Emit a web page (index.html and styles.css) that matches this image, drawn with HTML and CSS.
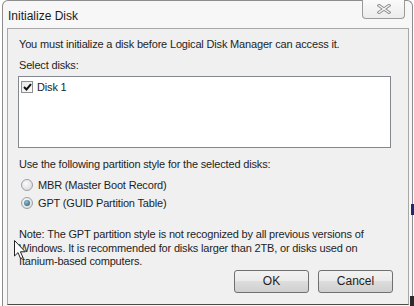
FILE: index.html
```html
<!DOCTYPE html>
<html lang="en">

<head>
    <meta charset="UTF-8">
    <meta name="viewport" content="width=device-width, initial-scale=1.0">
    <title>Initialize Disk</title>
    <link rel="stylesheet" href="styles.css">
</head>

<body>
    <div class="window">
        <div class="titlebar">
            <span class="title">Initialize Disk</span>
            <button class="close-button" aria-label="Close">
                <svg width="14" height="10" viewBox="0 0 14 10">
                    <path d="M2 1.5 L12 8.5 M12 1.5 L2 8.5" stroke="#8a8a8a" stroke-width="3.2" stroke-linecap="square" fill="none" />
                    <path d="M2 1.5 L12 8.5 M12 1.5 L2 8.5" stroke="#f4f4f4" stroke-width="1.3" stroke-linecap="square" fill="none" />
                </svg>
            </button>
        </div>
        <div class="panel">
            <p class="intro">You must initialize a disk before Logical Disk Manager can access it.</p>
            <p class="label">Select disks:</p>
            <div class="disk-list">
                <label class="disk-item">
                    <span class="checkbox">
                        <svg width="9" height="8" viewBox="0 0 9 8">
                            <path d="M1 4 L3.5 6.5 L8 1.2" stroke="#111" stroke-width="2" fill="none" />
                        </svg>
                    </span>
                    Disk 1
                </label>
            </div>
            <p class="label style-label">Use the following partition style for the selected disks:</p>
            <div class="options">
                <label class="option"><span class="radio"></span>MBR (Master Boot Record)</label>
                <label class="option"><span class="radio checked"></span>GPT (GUID Partition Table)</label>
            </div>
            <p class="note">Note: The GPT partition style is not recognized by all previous versions of<br>
                Windows. It is recommended for disks larger than 2TB, or disks used on<br>
                Itanium-based computers.</p>
            <div class="actions">
                <button class="button">OK</button>
                <button class="button">Cancel</button>
            </div>
            <svg class="cursor" width="13" height="20" viewBox="0 0 13 20">
                <path d="M0.5 0.5 L0.5 16 L4 12.6 L6.6 18.6 L9 17.6 L6.4 11.8 L11.3 11.8 Z" fill="#fff" stroke="#222" stroke-width="1" stroke-linejoin="round" />
            </svg>
        </div>
    </div>
    <div class="backdrop-mark"></div>
    <div class="backdrop-corner"></div>
</body>

</html>
```

FILE: styles.css
```css
* {
    box-sizing: border-box;
}

html,
body {
    margin: 0;
    width: 414px;
    height: 306px;
    overflow: hidden;
}

body {
    background-color: #ffffff;
    font-family: 'Liberation Sans', Arial, sans-serif;
    font-size: 11px;
    letter-spacing: -0.17px;
    color: #1e1e1e;
    position: relative;
}

p {
    margin: 0;
}

.window {
    margin-left: 2px;
    width: 411px;
    height: 306px;
    border: 1px solid #8c8c8c;
    border-bottom: none;
    border-radius: 6px 6px 0 0;
    background-color: #f7f7f7;
}

.titlebar {
    height: 27px;
    display: flex;
    align-items: flex-start;
    justify-content: space-between;
}

.title {
    padding: 8px 0 0 5px;
    font-size: 12px;
    line-height: 14px;
    letter-spacing: 0;
    color: #1a1a1a;
}

.close-button {
    margin: -1px 7px 0 0;
    width: 43px;
    height: 19px;
    padding: 0;
    border: 1px solid #9a9a9a;
    border-top: none;
    border-radius: 0 0 4px 4px;
    background: linear-gradient(#fafafa, #ececec);
    display: flex;
    align-items: center;
    justify-content: center;
}

.panel {
    position: relative;
    margin: 0 3px 0 4px;
    border: 1px solid #a8a8a8;
    border-bottom-color: #4a4a4a;
    background-color: #f0f0f0;
    padding: 8px 15px 0 11px;
    height: 277px;
}

.intro,
.label,
.note,
.option,
.disk-item {
    line-height: 14px;
}

.label {
    margin-top: 7px;
}

.disk-list {
    margin: 4px 0 0 -1px;
    width: 373px;
    height: 72px;
    border: 1px solid #838890;
    background-color: #ffffff;
    padding: 3px 2px;
}

.disk-item {
    display: flex;
    align-items: center;
    gap: 4px;
}

.checkbox {
    width: 12px;
    height: 12px;
    border: 1px solid #8e8f8f;
    background: linear-gradient(135deg, #e8e8e8, #fcfcfc);
    display: flex;
    align-items: center;
    justify-content: center;
}

.style-label {
    margin-top: 9px;
}

.options {
    margin-top: 5px;
    display: flex;
    flex-direction: column;
}

.option {
    height: 18px;
    display: flex;
    align-items: center;
    gap: 5px;
    padding-left: 2px;
}

.radio {
    width: 12px;
    height: 12px;
    border-radius: 50%;
    border: 1px solid #9aa0a6;
    background: radial-gradient(circle at 40% 35%, #fafafa, #d6d6d6);
    display: flex;
    align-items: center;
    justify-content: center;
}

.radio.checked::after {
    content: '';
    width: 6px;
    height: 6px;
    border-radius: 50%;
    background: radial-gradient(circle at 40% 35%, #8fc2d8, #1f4f6b);
}

.note {
    margin-top: 16px;
    line-height: 13.5px;
}

.actions {
    margin-top: 1px;
    display: flex;
    justify-content: flex-end;
    gap: 9px;
}

.button {
    width: 75px;
    height: 23px;
    border: 1px solid #707070;
    border-radius: 3px;
    background: linear-gradient(#f2f2f2 0%, #ebebeb 45%, #dddddd 50%, #cfcfcf 100%);
    font-family: 'Liberation Sans', Arial, sans-serif;
    font-size: 12px;
    color: #1e1e1e;
    padding: 0;
}

.cursor {
    position: absolute;
    left: 6px;
    top: 211px;
}

.backdrop-mark {
    position: absolute;
    left: 411px;
    top: 204px;
    width: 3px;
    height: 11px;
    background-color: #1c2a6e;
}

.backdrop-corner {
    position: absolute;
    left: 410px;
    top: 296px;
    width: 4px;
    height: 10px;
    background-color: #2a2a2a;
}
```
